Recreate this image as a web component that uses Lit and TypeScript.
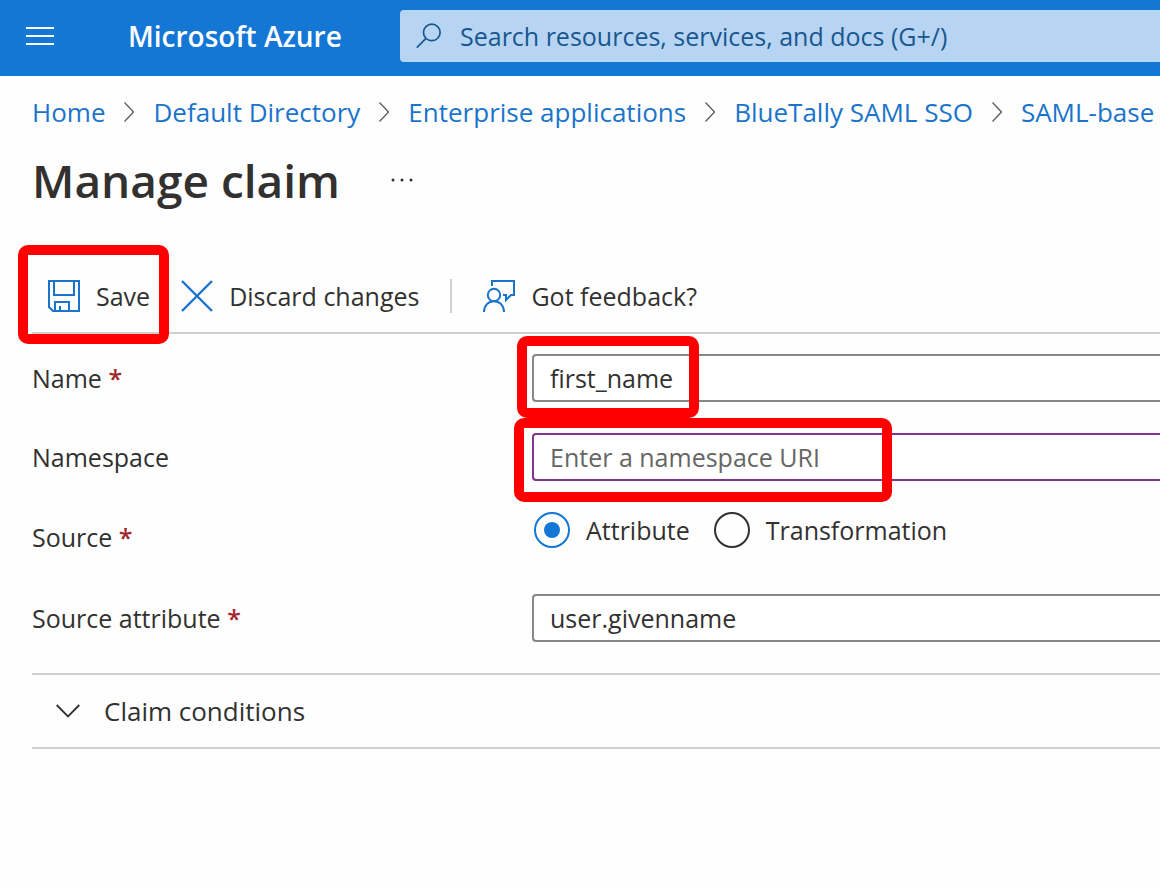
import { LitElement, html, css, svg } from "lit";
import { customElement, state } from "lit/decorators.js";

const chevronRight = html`<svg class="crumb-sep" viewBox="0 0 10 20" aria-hidden="true">
  <path d="M0.5 0.5 L9.5 10 L0.5 19.5" fill="none" stroke="#605e5c" stroke-width="1.3" />
</svg>`;

@customElement("app-root")
export class AppRoot extends LitElement {
  @state() private source = "attribute";
  @state() private open = false;

  static styles = css`
    :host {
      display: block;
      min-height: 100vh;
      overflow: hidden;
      background: #fefefe;
      color: #323130;
      font-family: "Segoe UI", "Open Sans", "Noto Sans", sans-serif;
      font-size: 25px;
      line-height: 36px;
    }
    *,
    *::before,
    *::after {
      box-sizing: border-box;
    }
    button,
    input {
      font: inherit;
      color: inherit;
    }
    button {
      border: 0;
      padding: 0;
      background: none;
      cursor: pointer;
    }
    svg {
      display: block;
      flex: none;
    }
    .topbar {
      display: flex;
      align-items: center;
      height: 76px;
      padding: 0 0 4px 26px;
      background: #1477d6;
      color: #fff;
    }
    .menu {
      margin-right: 74px;
    }
    .menu svg {
      width: 28px;
      height: 20px;
    }
    .brand {
      flex: none;
      width: 272px;
      color: #fff;
      font-size: 28px;
      font-weight: 600;
      text-decoration: none;
      white-space: nowrap;
    }
    .search {
      display: flex;
      flex: 1;
      align-items: center;
      gap: 18px;
      height: 52px;
      padding-left: 16px;
      border-radius: 4px 0 0 4px;
      background: #b7d5f3;
      color: #19578f;
    }
    .search svg {
      width: 26px;
      height: 26px;
    }
    .search input {
      flex: 1;
      min-width: 0;
      height: 40px;
      padding: 0;
      border: 0;
      outline: 0;
      background: none;
    }
    .search input::placeholder {
      color: #19578f;
      opacity: 1;
    }
    .crumbs {
      display: flex;
      align-items: center;
      gap: 19px;
      margin: 0;
      padding: 16px 0 0 32px;
      list-style: none;
      font-size: 26px;
      line-height: 40px;
      white-space: nowrap;
    }
    .crumbs li {
      display: flex;
      align-items: center;
      gap: 19px;
    }
    .crumbs a {
      color: #1a74cb;
      text-decoration: none;
    }
    .crumb-sep {
      width: 10px;
      height: 20px;
    }
    .heading {
      display: flex;
      align-items: center;
      gap: 50px;
      padding: 16px 0 0 32px;
    }
    h1 {
      margin: 0;
      font-size: 46px;
      font-weight: 600;
      line-height: 64px;
    }
    .more svg {
      width: 24px;
      height: 24px;
    }
    .content {
      margin-left: 32px;
    }
    .toolbar {
      display: flex;
      align-items: center;
      gap: 31px;
      height: 74px;
      margin-top: 48px;
      padding-left: 16px;
      border-bottom: 2px solid #d2d0ce;
      white-space: nowrap;
    }
    .command {
      display: flex;
      align-items: center;
      gap: 16px;
    }
    .command svg {
      width: 32px;
      height: 32px;
    }
    .divider {
      width: 2px;
      height: 34px;
      background: #d2d0ce;
    }
    .marked {
      position: relative;
    }
    .marked::after {
      content: "";
      position: absolute;
      z-index: 1;
      border: 10px solid #fe0000;
      border-radius: 10px;
      pointer-events: none;
    }
    .mark-save::after {
      inset: -33px -19px -30px -30px;
    }
    .mark-name::after {
      top: -18px;
      left: -15px;
      width: 182px;
      height: 82px;
    }
    .mark-namespace::after {
      top: -15px;
      left: -18px;
      width: 378px;
      height: 84px;
    }
    .form {
      display: grid;
      gap: 31px;
      padding: 20px 0 31px;
    }
    .row {
      display: grid;
      grid-template-columns: 500px minmax(0, 1fr);
      align-items: center;
      min-height: 48px;
      margin: 0;
      padding: 0;
      border: 0;
    }
    .radio-row {
      align-items: start;
      min-height: 51px;
    }
    .radio-row > .label {
      line-height: 51px;
    }
    .required {
      color: #a4262c;
      font-weight: 600;
    }
    .text {
      display: block;
      width: 100%;
      height: 48px;
      padding: 0 0 0 16px;
      border: 2px solid #8a8886;
      border-right: 0;
      border-radius: 4px 0 0 4px;
      outline: 0;
      background: #fff;
    }
    .text.active {
      border-color: #7f3591;
    }
    .text::placeholder {
      color: #666664;
      opacity: 1;
    }
    .radios {
      display: flex;
      gap: 24px;
      padding-left: 2px;
    }
    .radio {
      display: flex;
      align-items: center;
      gap: 16px;
      cursor: pointer;
    }
    .radio input {
      appearance: none;
      flex: none;
      display: grid;
      place-items: center;
      width: 36px;
      height: 36px;
      margin: 0;
      border: 2px solid #323130;
      border-radius: 50%;
    }
    .radio input:checked {
      border-color: #1477d6;
    }
    .radio input:checked::before {
      content: "";
      width: 16px;
      height: 16px;
      border-radius: 50%;
      background: #1477d6;
    }
    .conditions {
      display: flex;
      align-items: center;
      gap: 24px;
      width: 100%;
      height: 76px;
      padding-left: 24px;
      border-top: 2px solid #d2d0ce;
      border-bottom: 2px solid #d2d0ce;
      font-size: 26px;
    }
    .conditions svg {
      width: 24px;
      height: 14px;
    }
  `;

  private crumbs = [
    "Home",
    "Default Directory",
    "Enterprise applications",
    "BlueTally SAML SSO",
    "SAML-base",
  ];

  private radio(value: string, label: string) {
    return html`<label class="radio">
      <input
        type="radio"
        name="source"
        value=${value}
        .checked=${this.source === value}
        @change=${() => (this.source = value)}
      />
      <span>${label}</span>
    </label>`;
  }

  render() {
    return html`
      <header class="topbar">
        <button class="menu" aria-label="Show portal menu">
          <svg viewBox="0 0 28 20">
            <path d="M0 2H28M0 10H28M0 18H28" stroke="#fff" stroke-width="2" />
          </svg>
        </button>
        <a class="brand" href="#">Microsoft Azure</a>
        <div class="search">
          <svg viewBox="0 0 26 26" fill="none" stroke="currentColor" stroke-width="1.7" aria-hidden="true">
            <circle cx="15.8" cy="9.4" r="8.3" />
            <path d="M10 15.3L0.8 24.6" />
          </svg>
          <input
            type="search"
            aria-label="Search"
            placeholder="Search resources, services, and docs (G+/)"
          />
        </div>
      </header>

      <nav aria-label="Breadcrumb">
        <ol class="crumbs">
          ${this.crumbs.map(
            (name, i) => html`<li>${i ? chevronRight : ""}<a href="#">${name}</a></li>`
          )}
        </ol>
      </nav>

      <div class="heading">
        <h1>Manage claim</h1>
        <button class="more" aria-label="More actions">
          <svg viewBox="0 0 24 24" fill="#323130">
            ${[3, 12, 21].map((x) => svg`<circle cx=${x} cy="12" r="1.5" />`)}
          </svg>
        </button>
      </div>

      <main class="content">
        <div class="toolbar" role="toolbar">
          <button class="command marked mark-save">
            <svg viewBox="0 0 32 32" fill="none" stroke="#1a74cb" stroke-width="2">
              <path d="M1 1H31V31H5L1 27Z" />
              <path d="M6 1V15H26V1" />
              <path d="M7 31V22H21V31M12 31V26" />
            </svg>
            <span>Save</span>
          </button>
          <button class="command">
            <svg viewBox="0 0 32 32" fill="none" stroke="#1a74cb" stroke-width="2.4">
              <path d="M1 1L31 31M31 1L1 31" />
            </svg>
            <span>Discard changes</span>
          </button>
          <div class="divider"></div>
          <button class="command">
            <svg viewBox="0 0 32 32" fill="none" stroke="#1a74cb" stroke-width="2">
              <path d="M9 6V1H31V15H28L23 20V15H20" />
              <circle cx="11" cy="15" r="6.2" />
              <path d="M1 32C1 25.500 5.500 21.200 11 21.200S21 25.500 21 32" />
            </svg>
            <span>Got feedback?</span>
          </button>
        </div>

        <form class="form" @submit=${(e: Event) => e.preventDefault()}>
          <div class="row">
            <label class="label" for="name">Name <span class="required">*</span></label>
            <div class="marked mark-name">
              <input class="text" id="name" type="text" value="first_name" required />
            </div>
          </div>
          <div class="row">
            <label class="label" for="namespace">Namespace</label>
            <div class="marked mark-namespace">
              <input class="text active" id="namespace" type="text" placeholder="Enter a namespace URI" />
            </div>
          </div>
          <div class="row radio-row" role="radiogroup" aria-labelledby="source-label">
            <span class="label" id="source-label">Source <span class="required">*</span></span>
            <div class="radios">
              ${this.radio("attribute", "Attribute")}
              ${this.radio("transformation", "Transformation")}
            </div>
          </div>
          <div class="row">
            <label class="label" for="source-attribute">
              Source attribute <span class="required">*</span>
            </label>
            <input class="text" id="source-attribute" type="text" value="user.givenname" required />
          </div>
        </form>

        <button
          class="conditions"
          aria-expanded=${this.open ? "true" : "false"}
          @click=${() => (this.open = !this.open)}
        >
          <svg viewBox="0 0 24 14" fill="none" stroke="#323130" stroke-width="1.8">
            <path d="M0.700 1L12 12.500L23.300 1" />
          </svg>
          <span>Claim conditions</span>
        </button>
      </main>
    `;
  }
}
